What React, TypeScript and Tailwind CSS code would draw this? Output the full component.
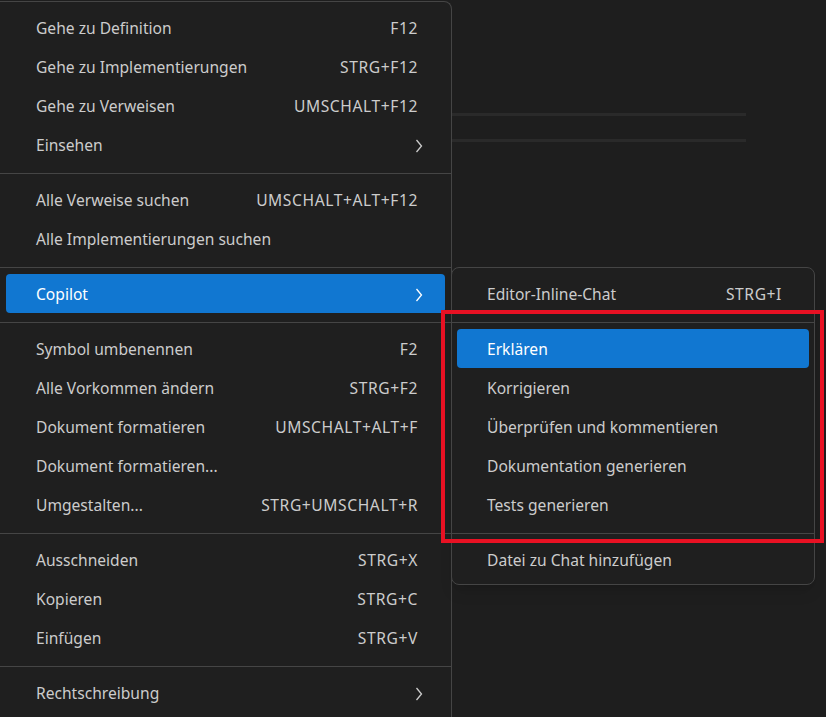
import React from 'react'

type Item = {
  label: string
  shortcut?: string
  sub?: boolean
  active?: boolean
}

const Chevron = ({ className }: { className?: string }) => (
  <svg width="8" height="14" viewBox="0 0 8 14" className={className}>
    <path d="M1.5 1 L6.5 7 L1.5 13" fill="none" stroke="currentColor" strokeWidth="1.3" />
  </svg>
)

const Separator = () => <div className="mt-[7px] mb-[8px] h-px bg-[#454545]" />

const Row = ({ item, inset = 'mx-1.5' }: { item: Item; inset?: string }) => (
  <div
    className={
      item.active
        ? `${inset} -mt-[2px] mb-[2px] flex h-[39px] items-center justify-between rounded-[4px] bg-[#1177d1] pt-[3px] pl-[30px] pr-[27px] text-white`
        : `${inset} flex h-[39px] items-center justify-between pb-px pl-[30px] pr-[27px] text-[#cccccc]`
    }
  >
    <span>{item.label}</span>
    {item.shortcut && <span className="tracking-[0.6px]">{item.shortcut}</span>}
    {item.sub && <Chevron className="-mr-[5px]" />}
  </div>
)

const mainGroups: Item[][] = [
  [
    { label: 'Gehe zu Definition', shortcut: 'F12' },
    { label: 'Gehe zu Implementierungen', shortcut: 'STRG+F12' },
    { label: 'Gehe zu Verweisen', shortcut: 'UMSCHALT+F12' },
    { label: 'Einsehen', sub: true },
  ],
  [
    { label: 'Alle Verweise suchen', shortcut: 'UMSCHALT+ALT+F12' },
    { label: 'Alle Implementierungen suchen' },
  ],
  [{ label: 'Copilot', sub: true, active: true }],
  [
    { label: 'Symbol umbenennen', shortcut: 'F2' },
    { label: 'Alle Vorkommen ändern', shortcut: 'STRG+F2' },
    { label: 'Dokument formatieren', shortcut: 'UMSCHALT+ALT+F' },
    { label: 'Dokument formatieren...' },
    { label: 'Umgestalten...', shortcut: 'STRG+UMSCHALT+R' },
  ],
  [
    { label: 'Ausschneiden', shortcut: 'STRG+X' },
    { label: 'Kopieren', shortcut: 'STRG+C' },
    { label: 'Einfügen', shortcut: 'STRG+V' },
  ],
  [{ label: 'Rechtschreibung', sub: true }],
]

const copilotGroups: Item[][] = [
  [{ label: 'Editor-Inline-Chat', shortcut: 'STRG+I' }],
  [
    { label: 'Erklären', active: true },
    { label: 'Korrigieren' },
    { label: 'Überprüfen und kommentieren' },
    { label: 'Dokumentation generieren' },
    { label: 'Tests generieren' },
  ],
  [{ label: 'Datei zu Chat hinzufügen' }],
]

const Groups = ({ groups, inset }: { groups: Item[][]; inset?: string }) => (
  <div className="flex flex-col">
    {groups.map((group, gi) => (
      <div key={gi} className="flex flex-col">
        {gi > 0 && <Separator />}
        {group.map((item) => (
          <Row key={item.label} item={item} inset={inset} />
        ))}
      </div>
    ))}
  </div>
)

export default function App() {
  return (
    <div className="relative h-[717px] w-[826px] overflow-hidden bg-[#1e1e1e] font-['Noto_Sans','Open_Sans',sans-serif] text-[15.6px]">
      <div className="flex">
        {/* main context menu */}
        <div className="mt-px h-[760px] w-[452px] shrink-0 rounded-tr-lg border-t border-r border-[#454545] bg-[#1f1f1f] pt-2">
          <Groups groups={mainGroups} />
        </div>

        {/* editor behind */}
        <div className="flex flex-col gap-[23px] pt-[113px]">
          <div className="h-[3px] w-[294px] bg-[#2a2a2a]" />
          <div className="h-[3px] w-[294px] bg-[#2a2a2a]" />
        </div>
      </div>

      {/* Copilot submenu */}
      <div className="absolute left-[451px] top-[267px] w-[364px] rounded-lg border border-[#454545] bg-[#1f1f1f] pt-2 pb-[3px] shadow-lg">
        <Groups groups={copilotGroups} inset="mx-[5px]" />
      </div>

      {/* annotation */}
      <div className="pointer-events-none absolute left-[441px] top-[310px] h-[233px] w-[383px] border-4 border-[#e81123]" />
    </div>
  )
}
